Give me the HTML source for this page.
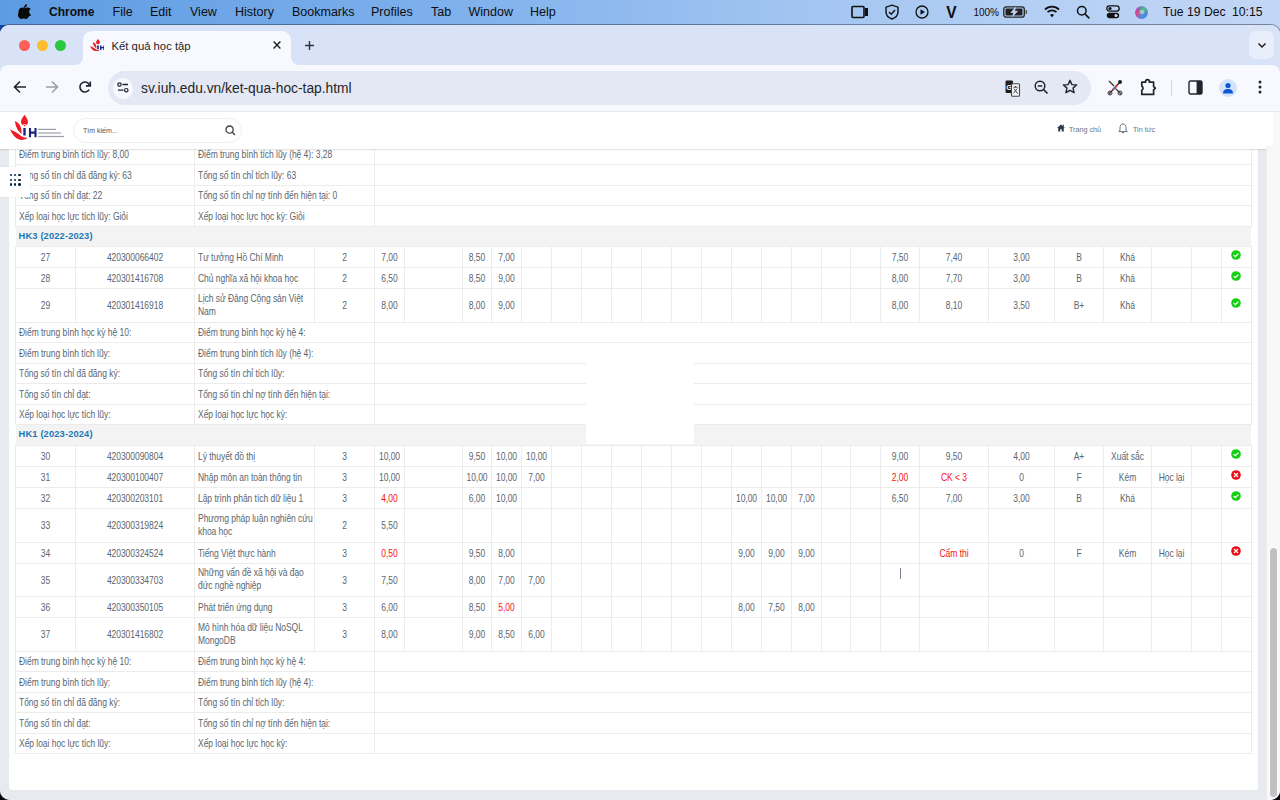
<!DOCTYPE html>
<html><head><meta charset="utf-8">
<style>
*{box-sizing:border-box;margin:0;padding:0}
html,body{width:1280px;height:800px;overflow:hidden;background:#050505;font-family:"Liberation Sans",sans-serif}
#deskr{position:absolute;left:1266px;top:24px;width:14px;height:14px;background:#c3d6f5}
#deskl{position:absolute;left:0;top:24px;width:14px;height:14px;background:#0b4aa8}
#menubar{position:absolute;left:0;top:0;width:1280px;height:25px;background:linear-gradient(90deg,#5d9be2 0%,#7eb0ec 35%,#9fc3f1 60%,#b3cff4 80%,#c3d6f5 100%);}
#win{position:absolute;left:0;top:25px;width:1280px;height:775px;border-radius:9px 9px 10px 10px;overflow:hidden;background:#d9e3f8;box-shadow:0 0 0 1px rgba(40,52,72,0.5)}
#tabstrip{position:absolute;left:0;top:0;width:1280px;height:40px;background:#d9e3f8}
#toolbar{position:absolute;left:0;top:40px;width:1280px;height:47px;background:#f8f9fe;border-radius:8px 8px 0 0;border-bottom:1px solid #e9ebf3}
#page{position:absolute;left:0;top:87px;width:1280px;height:688px;background:#e7ebf0;overflow:hidden}
#content{position:absolute;left:0;top:-112px;width:1280px;height:800px}
.card{position:absolute;left:9px;top:111px;width:1248.5px;height:679px;background:#fff;border-radius:3px}
.hl{position:absolute;height:1px;background:#ececec}
.vl{position:absolute;width:1px;background:#ececec}
.cell{position:absolute;display:flex;align-items:center;justify-content:center;text-align:center;font-size:8.5px;line-height:13.3px;color:#5a6671;padding-top:2.6px;white-space:nowrap;letter-spacing:-0.04px}
.cell span{display:inline-block;transform:scaleY(1.18);transform-origin:50% 77%;line-height:11.2px}
.cell.l{justify-content:flex-start;text-align:left;padding-left:3px}
.cell.l span{transform-origin:0 77%}
.cell.red{color:#fa1212}
.hk span{display:inline-block;transform:scaleY(1.06);transform-origin:0 60%}
.hk{position:absolute;background:#f3f3f3;display:flex;align-items:center;padding-left:2.6px;padding-bottom:1.6px;letter-spacing:0.15px;font-size:9.3px;font-weight:bold;color:#1a78b8}
.ic{position:absolute}
.wbox{position:absolute;background:#fff}

#menubar .mi{position:absolute;top:4px;font-size:12.5px;color:#0d0d0d;line-height:16px;white-space:nowrap}
#menubar .mi.b{font-weight:bold;font-size:12px}
.tl{position:absolute;top:14.5px;width:11.5px;height:11.5px;border-radius:50%}
#tab{position:absolute;left:83px;top:6px;width:208px;height:41px;background:#f8f9fe;border-radius:9px 9px 0 0}
.flare{position:absolute;top:32px;width:8px;height:8px;background:#f8f9fe;overflow:hidden}
.flare div{position:absolute;left:-8px;top:-8px;width:16px;height:16px;border-radius:50%;background:#d9e3f8}
.flare.r div{left:0}
.tabtitle{position:absolute;left:111.5px;top:14px;font-size:11.3px;line-height:14px;color:#1f1f1f;white-space:nowrap}
#tabdd{position:absolute;left:1249px;top:6px;width:25px;height:28px;border-radius:7px;background:#e9eefb}
#omni{position:absolute;left:108px;top:6px;width:983px;height:34px;border-radius:17px;background:#e3e8f4}
#omnicirc{position:absolute;left:113px;top:12.5px;width:20px;height:21px;border-radius:50%;background:#f8f9fe}
.url{position:absolute;left:141px;top:15px;font-size:13.8px;line-height:17px;color:#262626;white-space:nowrap}
#hdr{position:absolute;left:0;top:111px;width:1266px;height:38px;background:#fff;box-shadow:0 1px 1.2px rgba(0,0,0,0.13)}
#hdrx{position:absolute;left:1266px;top:111px;width:7px;height:35px;background:#fff}
#search{position:absolute;left:73px;top:7px;width:169px;height:25px;border-radius:13px;border:1px solid #edf0f3;background:#fff}
#search span{position:absolute;left:9px;top:7px;font-size:7px;line-height:9px;color:#555}
.nav{position:absolute;top:14px;font-size:7.2px;line-height:9px;color:#6b7580;white-space:nowrap}
#sbtrack{position:absolute;left:1266px;top:111px;width:14px;height:689px;background:#f8f8f8;border-left:1px solid #ededed}
#sbthumb{position:absolute;left:1270px;top:548px;width:7px;height:249px;border-radius:3.5px;background:#c1c1c1;box-shadow:0 0 0 1px #fdfdfd}
#grid{position:absolute;left:0;top:167px;width:30px;height:30px;background:#fff;box-shadow:0 0 3px rgba(0,0,0,0.06)}
#grid i{position:absolute;width:2.5px;height:2.5px;border-radius:50%;background:#0c2740}

</style></head><body>
<div id="deskr"></div><div id="deskl"></div>
<div id="menubar">
<svg style="position:absolute;left:18px;top:4px" width="13" height="15" viewBox="0 0 170 200"><path fill="#0a0a0a" d="M150.4 155.5c-3 7-6.6 13.4-10.8 19.3-5.7 8.1-10.4 13.7-14 16.8-5.6 5.1-11.5 7.8-17.9 7.9-4.6 0-10.1-1.3-16.5-3.9-6.5-2.6-12.4-3.9-17.8-3.9-5.7 0-11.8 1.3-18.3 3.9-6.5 2.6-11.8 4-15.8 4.1-6.1.3-12.2-2.4-18.3-8.1-3.9-3.4-8.7-9.2-14.5-17.5-6.2-8.8-11.3-18.9-15.3-30.5C7.1 131 5 118.8 5 107c0-13.5 2.9-25.1 8.8-34.9 4.6-7.8 10.7-14 18.4-18.5 7.7-4.5 16-6.8 24.9-7 4.9 0 11.3 1.5 19.2 4.5 7.9 3 13 4.5 15.2 4.5 1.7 0 7.3-1.8 16.8-5.3 9-3.2 16.5-4.6 22.8-4 16.9 1.4 29.6 8 38 20-15.1 9.2-22.6 22-22.5 38.5.1 12.8 4.8 23.5 14 32 4.2 4 8.8 7 14 9.2-1.1 3.3-2.3 6.4-3.6 9.5zM119.1 7.3c0 10.1-3.7 19.5-11 28.2-8.9 10.3-19.6 16.3-31.2 15.4-.1-1.2-.2-2.5-.2-3.9 0-9.7 4.2-20 11.7-28.5 3.7-4.3 8.5-7.8 14.2-10.7C108.3 5 113.7 3.4 118.8 3c.2 1.4.3 2.8.3 4.3z"/></svg>
<div class="mi b" style="left:49px">Chrome</div>
<div class="mi" style="left:112.5px">File</div>
<div class="mi" style="left:150px">Edit</div>
<div class="mi" style="left:190px">View</div>
<div class="mi" style="left:235px">History</div>
<div class="mi" style="left:292px">Bookmarks</div>
<div class="mi" style="left:371px">Profiles</div>
<div class="mi" style="left:431px">Tab</div>
<div class="mi" style="left:468.5px">Window</div>
<div class="mi" style="left:530px">Help</div>

<svg style="position:absolute;left:851px;top:5px" width="18" height="14" viewBox="0 0 18 14"><rect x="1" y="1.5" width="12" height="11" rx="1" fill="none" stroke="#111" stroke-width="1.6"/><rect x="14" y="3" width="3" height="8" fill="#111"/></svg>
<svg style="position:absolute;left:884px;top:4px" width="16" height="16" viewBox="0 0 16 16"><path d="M8 1.2 L14 3.2 V8 C14 11.5 11.2 13.8 8 15 C4.8 13.8 2 11.5 2 8 V3.2 Z" fill="none" stroke="#111" stroke-width="1.4"/><path d="M5 8 L7.2 10.2 L11 6" fill="none" stroke="#111" stroke-width="1.4"/></svg>
<svg style="position:absolute;left:915px;top:5px" width="14" height="14" viewBox="0 0 14 14"><circle cx="7" cy="7" r="6" fill="none" stroke="#111" stroke-width="1.3"/><path d="M5.5 4.2 L10 7 L5.5 9.8Z" fill="#111"/></svg>
<div class="mi b" style="left:946px;font-size:16px;top:4.5px;transform:scaleX(0.97)">V</div>
<div class="mi" style="left:973.5px;font-size:10px;top:5px;letter-spacing:-0.1px">100%</div>
<svg style="position:absolute;left:1003px;top:6px" width="25" height="12" viewBox="0 0 25 12"><rect x="0.8" y="0.8" width="20.5" height="10.4" rx="2.5" fill="none" stroke="#222" stroke-width="1.3"/><rect x="2.5" y="2.5" width="17" height="7" rx="1" fill="#222"/><rect x="22.5" y="4" width="1.6" height="4" rx="0.8" fill="#555"/><path d="M12.5 1.5 L8 6.5 H11 L9.5 10.5 L14.5 5.2 H11.5 Z" fill="#c6d8f5" stroke="#c6d8f5" stroke-width="0.8"/></svg>
<svg style="position:absolute;left:1044px;top:5px" width="16" height="13" viewBox="0 0 16 13"><path d="M1 4.5 A10 10 0 0 1 15 4.5" fill="none" stroke="#111" stroke-width="1.8"/><path d="M3.6 7.2 A6.3 6.3 0 0 1 12.4 7.2" fill="none" stroke="#111" stroke-width="1.8"/><path d="M6 10 L8 12.3 L10 10 A3 3 0 0 0 6 10Z" fill="#111"/></svg>
<svg style="position:absolute;left:1076px;top:5px" width="14" height="14" viewBox="0 0 14 14"><circle cx="5.8" cy="5.8" r="4.3" fill="none" stroke="#111" stroke-width="1.5"/><path d="M9 9 L12.8 12.8" stroke="#111" stroke-width="1.7" stroke-linecap="round"/></svg>
<svg style="position:absolute;left:1106px;top:5px" width="14" height="14" viewBox="0 0 14 14"><rect x="0.8" y="0.8" width="12.4" height="5.4" rx="2.7" fill="none" stroke="#111" stroke-width="1.3"/><circle cx="4" cy="3.5" r="1.6" fill="#111"/><rect x="0.8" y="7.8" width="12.4" height="5.4" rx="2.7" fill="#111"/><circle cx="10" cy="10.5" r="1.6" fill="#c6d8f5"/></svg>
<svg style="position:absolute;left:1134.5px;top:5.5px" width="13" height="13" viewBox="0 0 14 14"><defs><radialGradient id="s1" cx="0.3" cy="0.6" r="0.6"><stop offset="0" stop-color="#ff3d6e"/><stop offset="1" stop-color="#ff3d6e" stop-opacity="0"/></radialGradient><radialGradient id="s2" cx="0.7" cy="0.25" r="0.55"><stop offset="0" stop-color="#2fd67a"/><stop offset="1" stop-color="#2fd67a" stop-opacity="0"/></radialGradient><radialGradient id="s3" cx="0.6" cy="0.85" r="0.55"><stop offset="0" stop-color="#23a8f2"/><stop offset="1" stop-color="#23a8f2" stop-opacity="0"/></radialGradient></defs><circle cx="7" cy="7" r="6.8" fill="#8a4fd8"/><circle cx="7" cy="7" r="6.8" fill="url(#s1)"/><circle cx="7" cy="7" r="6.8" fill="url(#s2)"/><circle cx="7" cy="7" r="6.8" fill="url(#s3)"/><circle cx="7.5" cy="6.5" r="2.5" fill="#fff" opacity="0.45"/></svg>
<div class="mi" style="left:1163px;font-size:12.2px">Tue 19 Dec</div>
<div class="mi" style="left:1232px;font-size:12.2px">10:15</div>

</div>
<div id="win">
<div id="tabstrip">
<div class="tl" style="left:18.5px;background:#fe5f57"></div>
<div class="tl" style="left:36.5px;background:#febc2e"></div>
<div class="tl" style="left:54.5px;background:#28c840"></div>
<div id="tab"></div>
<div class="flare" style="left:75px"><div></div></div>
<div class="flare r" style="left:291px"><div></div></div>
<svg style="position:absolute;left:89.8px;top:13.8px" width="14.6" height="12.6" viewBox="4 2.8 26.5 25.7" preserveAspectRatio="none">
<path d="M18.5 2.8 C20 5 22 7.5 22 10 C22 12 20.5 13.5 18.5 13.5 C16.5 13.5 15 12 15 10 C15 7.5 17 5 18.5 2.8Z" fill="#f01c24"/>
<path d="M9 9 C13 11 16 14 15.5 22 C12 19 9.5 15 9 9Z" fill="#f01c24"/>
<path d="M4 17.5 C8 19 12 21 15 24 C17 25.5 20 26 22 25.5 C20 27.5 16 28.5 13 27.5 C9 26 6 22 4 17.5Z" fill="#f01c24"/>
<rect x="17" y="16" width="3" height="8" fill="#1a2380"/>
<path d="M23.5 16 V25.2 M29.5 16 V25.2 M23.5 20.6 H29.5" stroke="#1a2380" stroke-width="2.6" fill="none"/>
</svg>
<div class="tabtitle">Kết quả học tập</div>
<svg style="position:absolute;left:272px;top:15px" width="10" height="10" viewBox="0 0 10 10"><path d="M1.6 1.6 L8.4 8.4 M8.4 1.6 L1.6 8.4" stroke="#1f1f1f" stroke-width="1.4"/></svg>
<svg style="position:absolute;left:304px;top:14.5px" width="11" height="11" viewBox="0 0 11 11"><path d="M5.5 1 V10 M1 5.5 H10" stroke="#2a3340" stroke-width="1.4"/></svg>
<div id="tabdd"><svg style="position:absolute;left:7.5px;top:10.5px" width="10" height="7" viewBox="0 0 10 7"><path d="M1.5 1.5 L5 5 L8.5 1.5" stroke="#1f1f1f" stroke-width="1.5" fill="none"/></svg></div>
</div>
<div id="toolbar">
<svg style="position:absolute;left:13px;top:15px" width="14" height="14" viewBox="0 0 14 14"><path d="M13 7 H2 M7 1.5 L1.5 7 L7 12.5" stroke="#1f2530" stroke-width="1.6" fill="none"/></svg>
<svg style="position:absolute;left:45px;top:15px" width="14" height="14" viewBox="0 0 14 14"><path d="M1 7 H12 M7 1.5 L12.5 7 L7 12.5" stroke="#9aa0a6" stroke-width="1.6" fill="none"/></svg>
<svg style="position:absolute;left:78px;top:15px" width="14" height="14" viewBox="0 0 14 14"><path d="M11.6 5.2 A5 5 0 1 0 11.2 9.6" stroke="#1f2530" stroke-width="1.6" fill="none"/><path d="M12.3 1.5 V5.9 H7.9" stroke="#1f2530" stroke-width="1.6" fill="none"/></svg>
<div id="omni"></div>
<div id="omnicirc"><svg style="position:absolute;left:4px;top:4px" width="12" height="11" viewBox="0 0 12 11"><circle cx="2.5" cy="2.5" r="1.7" fill="none" stroke="#1f2530" stroke-width="1.2"/><path d="M5.5 2.5 H11" stroke="#1f2530" stroke-width="1.3"/><circle cx="9.3" cy="8.2" r="1.7" fill="none" stroke="#1f2530" stroke-width="1.2"/><path d="M1 8.2 H6.5" stroke="#1f2530" stroke-width="1.3"/></svg></div>
<div class="url">sv.iuh.edu.vn/ket-qua-hoc-tap.html</div>
<svg style="position:absolute;left:1004.5px;top:14.5px" width="16" height="17" viewBox="0 0 16 17"><rect x="0.5" y="0.5" width="7.5" height="12.5" rx="1.2" fill="#1e1e1e"/><text x="1.2" y="10" font-size="7.5" font-family="Liberation Sans" font-weight="bold" fill="#fff">G</text><rect x="6.5" y="3.8" width="8" height="12.4" rx="1" fill="#f4f6fb" stroke="#444" stroke-width="1.1"/><path d="M8.3 7.2 H12.8 M10.5 6 V7.2 M9 8.6 L12.6 13.6 M12.2 8.6 L8.6 13.2" stroke="#333" stroke-width="0.9" fill="none"/></svg>
<svg style="position:absolute;left:1034px;top:15px" width="15" height="15" viewBox="0 0 15 15"><circle cx="6" cy="6" r="4.8" fill="none" stroke="#1f2530" stroke-width="1.5"/><path d="M3.8 6 H8.2" stroke="#1f2530" stroke-width="1.4"/><path d="M9.5 9.5 L13.5 13.5" stroke="#1f2530" stroke-width="1.7"/></svg>
<svg style="position:absolute;left:1062px;top:14px" width="16" height="16" viewBox="0 0 16 16"><path d="M8 1.3 L9.9 5.6 L14.6 6 L11 9.1 L12.1 13.7 L8 11.3 L3.9 13.7 L5 9.1 L1.4 6 L6.1 5.6 Z" fill="none" stroke="#1f2530" stroke-width="1.4" stroke-linejoin="round"/></svg>
<svg style="position:absolute;left:1107px;top:14px" width="16" height="17" viewBox="0 0 16 17"><path d="M2 2 L7 7 M14 15 L9 10 M2 15 L14 2" stroke="#333" stroke-width="1.3"/><circle cx="13" cy="3" r="2" fill="#222"/><circle cx="3" cy="14" r="2" fill="none" stroke="#333" stroke-width="1"/><circle cx="13" cy="14" r="2" fill="none" stroke="#333" stroke-width="1"/><path d="M5.5 11 L10.5 6" stroke="#e53935" stroke-width="1.8"/><circle cx="8" cy="9" r="1.2" fill="#3b6fe0"/></svg>
<svg style="position:absolute;left:1139.5px;top:13px" width="17" height="18" viewBox="0 0 17 18"><path d="M1.8 4.2 H5.6 V3.6 A1.9 1.9 0 0 1 9.4 3.6 V4.2 H13.6 V8.6 L15.4 10.2 L13.6 11.8 V16.4 H1.8 V12.2 C3.4 11.6 3.4 8.8 1.8 8.2 Z" fill="#f8f9fe" stroke="#1f2530" stroke-width="1.7" stroke-linejoin="round"/></svg>
<div style="position:absolute;left:1170.5px;top:15px;width:1.3px;height:15.5px;background:#c9d6ee"></div>
<svg style="position:absolute;left:1188px;top:15px" width="15" height="15" viewBox="0 0 15 15"><rect x="1" y="1" width="13" height="13" rx="1.5" fill="none" stroke="#1f2530" stroke-width="1.4"/><rect x="8.6" y="1" width="5.4" height="13" fill="#1f2530"/></svg>
<div style="position:absolute;left:1219px;top:14px;width:18px;height:18px;border-radius:50%;background:#d3e3fd"></div>
<svg style="position:absolute;left:1222px;top:17px" width="12" height="12" viewBox="0 0 12 12"><circle cx="6" cy="3.6" r="2.6" fill="#0b57d0"/><path d="M1 11.5 C1 8 3.2 7 6 7 C8.8 7 11 8 11 11.5Z" fill="#0b57d0"/></svg>
<svg style="position:absolute;left:1257px;top:14px" width="6" height="16" viewBox="0 0 6 16"><circle cx="3" cy="3" r="1.5" fill="#1f2530"/><circle cx="3" cy="8" r="1.5" fill="#1f2530"/><circle cx="3" cy="13" r="1.5" fill="#1f2530"/></svg>
</div>
 <div id="page"><div id="content">
  <div class="card"></div>
<div class="vl" style="left:15px;top:144px;height:20px"></div>
<div class="vl" style="left:194px;top:144px;height:20px"></div>
<div class="vl" style="left:374px;top:144px;height:20px"></div>
<div class="vl" style="left:1251px;top:144px;height:20px"></div>
<div class="cell l" style="left:16px;width:178px;top:145px;height:19px"><span>Điểm trung bình tích lũy: 8,00</span></div>
<div class="cell l" style="left:195px;width:179px;top:145px;height:19px"><span>Điểm trung bình tích lũy (hệ 4): 3,28</span></div>
<div class="hl" style="top:144px;left:15px;width:1237px"></div>
<div class="vl" style="left:15px;top:164px;height:21px"></div>
<div class="vl" style="left:194px;top:164px;height:21px"></div>
<div class="vl" style="left:374px;top:164px;height:21px"></div>
<div class="vl" style="left:1251px;top:164px;height:21px"></div>
<div class="cell l" style="left:16px;width:178px;top:165px;height:20px"><span>Tổng số tín chỉ đã đăng ký: 63</span></div>
<div class="cell l" style="left:195px;width:179px;top:165px;height:20px"><span>Tổng số tín chỉ tích lũy: 63</span></div>
<div class="hl" style="top:164px;left:15px;width:1237px"></div>
<div class="vl" style="left:15px;top:185px;height:20px"></div>
<div class="vl" style="left:194px;top:185px;height:20px"></div>
<div class="vl" style="left:374px;top:185px;height:20px"></div>
<div class="vl" style="left:1251px;top:185px;height:20px"></div>
<div class="cell l" style="left:16px;width:178px;top:186px;height:19px"><span>Tổng số tín chỉ đạt: 22</span></div>
<div class="cell l" style="left:195px;width:179px;top:186px;height:19px"><span>Tổng số tín chỉ nợ tính đến hiện tại: 0</span></div>
<div class="hl" style="top:185px;left:15px;width:1237px"></div>
<div class="vl" style="left:15px;top:205px;height:21px"></div>
<div class="vl" style="left:194px;top:205px;height:21px"></div>
<div class="vl" style="left:374px;top:205px;height:21px"></div>
<div class="vl" style="left:1251px;top:205px;height:21px"></div>
<div class="cell l" style="left:16px;width:178px;top:206px;height:20px"><span>Xếp loại học lực tích lũy: Giỏi</span></div>
<div class="cell l" style="left:195px;width:179px;top:206px;height:20px"><span>Xếp loại học lực học kỳ: Giỏi</span></div>
<div class="hl" style="top:205px;left:15px;width:1237px"></div>
<div class="hk" style="left:16px;width:1235px;top:227px;height:19px"><span>HK3 (2022-2023)</span></div>
<div class="hl" style="top:226px;left:15px;width:1237px"></div>
<div class="vl" style="left:15px;top:246px;height:21px"></div>
<div class="vl" style="left:75px;top:246px;height:21px"></div>
<div class="vl" style="left:194px;top:246px;height:21px"></div>
<div class="vl" style="left:314px;top:246px;height:21px"></div>
<div class="vl" style="left:374px;top:246px;height:21px"></div>
<div class="vl" style="left:404px;top:246px;height:21px"></div>
<div class="vl" style="left:462px;top:246px;height:21px"></div>
<div class="vl" style="left:491px;top:246px;height:21px"></div>
<div class="vl" style="left:521px;top:246px;height:21px"></div>
<div class="vl" style="left:551px;top:246px;height:21px"></div>
<div class="vl" style="left:581px;top:246px;height:21px"></div>
<div class="vl" style="left:611px;top:246px;height:21px"></div>
<div class="vl" style="left:641px;top:246px;height:21px"></div>
<div class="vl" style="left:671px;top:246px;height:21px"></div>
<div class="vl" style="left:701px;top:246px;height:21px"></div>
<div class="vl" style="left:731px;top:246px;height:21px"></div>
<div class="vl" style="left:761px;top:246px;height:21px"></div>
<div class="vl" style="left:791px;top:246px;height:21px"></div>
<div class="vl" style="left:821px;top:246px;height:21px"></div>
<div class="vl" style="left:850px;top:246px;height:21px"></div>
<div class="vl" style="left:880px;top:246px;height:21px"></div>
<div class="vl" style="left:919px;top:246px;height:21px"></div>
<div class="vl" style="left:988px;top:246px;height:21px"></div>
<div class="vl" style="left:1054px;top:246px;height:21px"></div>
<div class="vl" style="left:1103px;top:246px;height:21px"></div>
<div class="vl" style="left:1151px;top:246px;height:21px"></div>
<div class="vl" style="left:1191px;top:246px;height:21px"></div>
<div class="vl" style="left:1221px;top:246px;height:21px"></div>
<div class="vl" style="left:1251px;top:246px;height:21px"></div>
<div class="cell" style="left:16px;width:59px;top:247px;height:20px"><span>27</span></div>
<div class="cell" style="left:76px;width:118px;top:247px;height:20px"><span>420300066402</span></div>
<div class="cell l" style="left:195px;width:119px;top:247px;height:20px"><span>Tư tưởng Hồ Chí Minh</span></div>
<div class="cell" style="left:315px;width:59px;top:247px;height:20px"><span>2</span></div>
<div class="cell" style="left:375px;width:29px;top:247px;height:20px"><span>7,00</span></div>
<div class="cell" style="left:463px;width:28px;top:247px;height:20px"><span>8,50</span></div>
<div class="cell" style="left:492px;width:29px;top:247px;height:20px"><span>7,00</span></div>
<div class="cell" style="left:881px;width:38px;top:247px;height:20px"><span>7,50</span></div>
<div class="cell" style="left:920px;width:68px;top:247px;height:20px"><span>7,40</span></div>
<div class="cell" style="left:989px;width:65px;top:247px;height:20px"><span>3,00</span></div>
<div class="cell" style="left:1055px;width:48px;top:247px;height:20px"><span>B</span></div>
<div class="cell" style="left:1104px;width:47px;top:247px;height:20px"><span>Khá</span></div>
<svg class="ic" style="left:1231px;top:249.7px" width="10" height="10" viewBox="0 0 10 10"><circle cx="5" cy="5" r="4.8" fill="#14d014"/><path d="M2.6 5.1 L4.3 6.7 L7.4 3.6" stroke="#fff" stroke-width="1.3" fill="none"/></svg>
<div class="hl" style="top:246px;left:15px;width:1237px"></div>
<div class="vl" style="left:15px;top:267px;height:21px"></div>
<div class="vl" style="left:75px;top:267px;height:21px"></div>
<div class="vl" style="left:194px;top:267px;height:21px"></div>
<div class="vl" style="left:314px;top:267px;height:21px"></div>
<div class="vl" style="left:374px;top:267px;height:21px"></div>
<div class="vl" style="left:404px;top:267px;height:21px"></div>
<div class="vl" style="left:462px;top:267px;height:21px"></div>
<div class="vl" style="left:491px;top:267px;height:21px"></div>
<div class="vl" style="left:521px;top:267px;height:21px"></div>
<div class="vl" style="left:551px;top:267px;height:21px"></div>
<div class="vl" style="left:581px;top:267px;height:21px"></div>
<div class="vl" style="left:611px;top:267px;height:21px"></div>
<div class="vl" style="left:641px;top:267px;height:21px"></div>
<div class="vl" style="left:671px;top:267px;height:21px"></div>
<div class="vl" style="left:701px;top:267px;height:21px"></div>
<div class="vl" style="left:731px;top:267px;height:21px"></div>
<div class="vl" style="left:761px;top:267px;height:21px"></div>
<div class="vl" style="left:791px;top:267px;height:21px"></div>
<div class="vl" style="left:821px;top:267px;height:21px"></div>
<div class="vl" style="left:850px;top:267px;height:21px"></div>
<div class="vl" style="left:880px;top:267px;height:21px"></div>
<div class="vl" style="left:919px;top:267px;height:21px"></div>
<div class="vl" style="left:988px;top:267px;height:21px"></div>
<div class="vl" style="left:1054px;top:267px;height:21px"></div>
<div class="vl" style="left:1103px;top:267px;height:21px"></div>
<div class="vl" style="left:1151px;top:267px;height:21px"></div>
<div class="vl" style="left:1191px;top:267px;height:21px"></div>
<div class="vl" style="left:1221px;top:267px;height:21px"></div>
<div class="vl" style="left:1251px;top:267px;height:21px"></div>
<div class="cell" style="left:16px;width:59px;top:268px;height:20px"><span>28</span></div>
<div class="cell" style="left:76px;width:118px;top:268px;height:20px"><span>420301416708</span></div>
<div class="cell l" style="left:195px;width:119px;top:268px;height:20px"><span>Chủ nghĩa xã hội khoa học</span></div>
<div class="cell" style="left:315px;width:59px;top:268px;height:20px"><span>2</span></div>
<div class="cell" style="left:375px;width:29px;top:268px;height:20px"><span>6,50</span></div>
<div class="cell" style="left:463px;width:28px;top:268px;height:20px"><span>8,50</span></div>
<div class="cell" style="left:492px;width:29px;top:268px;height:20px"><span>9,00</span></div>
<div class="cell" style="left:881px;width:38px;top:268px;height:20px"><span>8,00</span></div>
<div class="cell" style="left:920px;width:68px;top:268px;height:20px"><span>7,70</span></div>
<div class="cell" style="left:989px;width:65px;top:268px;height:20px"><span>3,00</span></div>
<div class="cell" style="left:1055px;width:48px;top:268px;height:20px"><span>B</span></div>
<div class="cell" style="left:1104px;width:47px;top:268px;height:20px"><span>Khá</span></div>
<svg class="ic" style="left:1231px;top:270.7px" width="10" height="10" viewBox="0 0 10 10"><circle cx="5" cy="5" r="4.8" fill="#14d014"/><path d="M2.6 5.1 L4.3 6.7 L7.4 3.6" stroke="#fff" stroke-width="1.3" fill="none"/></svg>
<div class="hl" style="top:267px;left:15px;width:1237px"></div>
<div class="vl" style="left:15px;top:288px;height:34px"></div>
<div class="vl" style="left:75px;top:288px;height:34px"></div>
<div class="vl" style="left:194px;top:288px;height:34px"></div>
<div class="vl" style="left:314px;top:288px;height:34px"></div>
<div class="vl" style="left:374px;top:288px;height:34px"></div>
<div class="vl" style="left:404px;top:288px;height:34px"></div>
<div class="vl" style="left:462px;top:288px;height:34px"></div>
<div class="vl" style="left:491px;top:288px;height:34px"></div>
<div class="vl" style="left:521px;top:288px;height:34px"></div>
<div class="vl" style="left:551px;top:288px;height:34px"></div>
<div class="vl" style="left:581px;top:288px;height:34px"></div>
<div class="vl" style="left:611px;top:288px;height:34px"></div>
<div class="vl" style="left:641px;top:288px;height:34px"></div>
<div class="vl" style="left:671px;top:288px;height:34px"></div>
<div class="vl" style="left:701px;top:288px;height:34px"></div>
<div class="vl" style="left:731px;top:288px;height:34px"></div>
<div class="vl" style="left:761px;top:288px;height:34px"></div>
<div class="vl" style="left:791px;top:288px;height:34px"></div>
<div class="vl" style="left:821px;top:288px;height:34px"></div>
<div class="vl" style="left:850px;top:288px;height:34px"></div>
<div class="vl" style="left:880px;top:288px;height:34px"></div>
<div class="vl" style="left:919px;top:288px;height:34px"></div>
<div class="vl" style="left:988px;top:288px;height:34px"></div>
<div class="vl" style="left:1054px;top:288px;height:34px"></div>
<div class="vl" style="left:1103px;top:288px;height:34px"></div>
<div class="vl" style="left:1151px;top:288px;height:34px"></div>
<div class="vl" style="left:1191px;top:288px;height:34px"></div>
<div class="vl" style="left:1221px;top:288px;height:34px"></div>
<div class="vl" style="left:1251px;top:288px;height:34px"></div>
<div class="cell" style="left:16px;width:59px;top:289px;height:33px"><span>29</span></div>
<div class="cell" style="left:76px;width:118px;top:289px;height:33px"><span>420301416918</span></div>
<div class="cell l" style="left:195px;width:119px;top:289px;height:33px"><span>Lịch sử Đảng Cộng sản Việt<br>Nam</span></div>
<div class="cell" style="left:315px;width:59px;top:289px;height:33px"><span>2</span></div>
<div class="cell" style="left:375px;width:29px;top:289px;height:33px"><span>8,00</span></div>
<div class="cell" style="left:463px;width:28px;top:289px;height:33px"><span>8,00</span></div>
<div class="cell" style="left:492px;width:29px;top:289px;height:33px"><span>9,00</span></div>
<div class="cell" style="left:881px;width:38px;top:289px;height:33px"><span>8,00</span></div>
<div class="cell" style="left:920px;width:68px;top:289px;height:33px"><span>8,10</span></div>
<div class="cell" style="left:989px;width:65px;top:289px;height:33px"><span>3,50</span></div>
<div class="cell" style="left:1055px;width:48px;top:289px;height:33px"><span>B+</span></div>
<div class="cell" style="left:1104px;width:47px;top:289px;height:33px"><span>Khá</span></div>
<svg class="ic" style="left:1231px;top:298.2px" width="10" height="10" viewBox="0 0 10 10"><circle cx="5" cy="5" r="4.8" fill="#14d014"/><path d="M2.6 5.1 L4.3 6.7 L7.4 3.6" stroke="#fff" stroke-width="1.3" fill="none"/></svg>
<div class="hl" style="top:288px;left:15px;width:1237px"></div>
<div class="vl" style="left:15px;top:322px;height:20px"></div>
<div class="vl" style="left:194px;top:322px;height:20px"></div>
<div class="vl" style="left:374px;top:322px;height:20px"></div>
<div class="vl" style="left:1251px;top:322px;height:20px"></div>
<div class="cell l" style="left:16px;width:178px;top:323px;height:19px"><span>Điểm trung bình học kỳ hệ 10:</span></div>
<div class="cell l" style="left:195px;width:179px;top:323px;height:19px"><span>Điểm trung bình học kỳ hệ 4:</span></div>
<div class="hl" style="top:322px;left:15px;width:1237px"></div>
<div class="vl" style="left:15px;top:342px;height:21px"></div>
<div class="vl" style="left:194px;top:342px;height:21px"></div>
<div class="vl" style="left:374px;top:342px;height:21px"></div>
<div class="vl" style="left:1251px;top:342px;height:21px"></div>
<div class="cell l" style="left:16px;width:178px;top:343px;height:20px"><span>Điểm trung bình tích lũy:</span></div>
<div class="cell l" style="left:195px;width:179px;top:343px;height:20px"><span>Điểm trung bình tích lũy (hệ 4):</span></div>
<div class="hl" style="top:342px;left:15px;width:1237px"></div>
<div class="vl" style="left:15px;top:363px;height:20px"></div>
<div class="vl" style="left:194px;top:363px;height:20px"></div>
<div class="vl" style="left:374px;top:363px;height:20px"></div>
<div class="vl" style="left:1251px;top:363px;height:20px"></div>
<div class="cell l" style="left:16px;width:178px;top:364px;height:19px"><span>Tổng số tín chỉ đã đăng ký:</span></div>
<div class="cell l" style="left:195px;width:179px;top:364px;height:19px"><span>Tổng số tín chỉ tích lũy:</span></div>
<div class="hl" style="top:363px;left:15px;width:1237px"></div>
<div class="vl" style="left:15px;top:383px;height:21px"></div>
<div class="vl" style="left:194px;top:383px;height:21px"></div>
<div class="vl" style="left:374px;top:383px;height:21px"></div>
<div class="vl" style="left:1251px;top:383px;height:21px"></div>
<div class="cell l" style="left:16px;width:178px;top:384px;height:20px"><span>Tổng số tín chỉ đạt:</span></div>
<div class="cell l" style="left:195px;width:179px;top:384px;height:20px"><span>Tổng số tín chỉ nợ tính đến hiện tại:</span></div>
<div class="hl" style="top:383px;left:15px;width:1237px"></div>
<div class="vl" style="left:15px;top:404px;height:20px"></div>
<div class="vl" style="left:194px;top:404px;height:20px"></div>
<div class="vl" style="left:374px;top:404px;height:20px"></div>
<div class="vl" style="left:1251px;top:404px;height:20px"></div>
<div class="cell l" style="left:16px;width:178px;top:405px;height:19px"><span>Xếp loại học lực tích lũy:</span></div>
<div class="cell l" style="left:195px;width:179px;top:405px;height:19px"><span>Xếp loại học lực học kỳ:</span></div>
<div class="hl" style="top:404px;left:15px;width:1237px"></div>
<div class="hk" style="left:16px;width:1235px;top:425px;height:20px"><span>HK1 (2023-2024)</span></div>
<div class="hl" style="top:424px;left:15px;width:1237px"></div>
<div class="vl" style="left:15px;top:445px;height:21px"></div>
<div class="vl" style="left:75px;top:445px;height:21px"></div>
<div class="vl" style="left:194px;top:445px;height:21px"></div>
<div class="vl" style="left:314px;top:445px;height:21px"></div>
<div class="vl" style="left:374px;top:445px;height:21px"></div>
<div class="vl" style="left:404px;top:445px;height:21px"></div>
<div class="vl" style="left:462px;top:445px;height:21px"></div>
<div class="vl" style="left:491px;top:445px;height:21px"></div>
<div class="vl" style="left:521px;top:445px;height:21px"></div>
<div class="vl" style="left:551px;top:445px;height:21px"></div>
<div class="vl" style="left:581px;top:445px;height:21px"></div>
<div class="vl" style="left:611px;top:445px;height:21px"></div>
<div class="vl" style="left:641px;top:445px;height:21px"></div>
<div class="vl" style="left:671px;top:445px;height:21px"></div>
<div class="vl" style="left:701px;top:445px;height:21px"></div>
<div class="vl" style="left:731px;top:445px;height:21px"></div>
<div class="vl" style="left:761px;top:445px;height:21px"></div>
<div class="vl" style="left:791px;top:445px;height:21px"></div>
<div class="vl" style="left:821px;top:445px;height:21px"></div>
<div class="vl" style="left:850px;top:445px;height:21px"></div>
<div class="vl" style="left:880px;top:445px;height:21px"></div>
<div class="vl" style="left:919px;top:445px;height:21px"></div>
<div class="vl" style="left:988px;top:445px;height:21px"></div>
<div class="vl" style="left:1054px;top:445px;height:21px"></div>
<div class="vl" style="left:1103px;top:445px;height:21px"></div>
<div class="vl" style="left:1151px;top:445px;height:21px"></div>
<div class="vl" style="left:1191px;top:445px;height:21px"></div>
<div class="vl" style="left:1221px;top:445px;height:21px"></div>
<div class="vl" style="left:1251px;top:445px;height:21px"></div>
<div class="cell" style="left:16px;width:59px;top:446px;height:20px"><span>30</span></div>
<div class="cell" style="left:76px;width:118px;top:446px;height:20px"><span>420300090804</span></div>
<div class="cell l" style="left:195px;width:119px;top:446px;height:20px"><span>Lý thuyết đồ thị</span></div>
<div class="cell" style="left:315px;width:59px;top:446px;height:20px"><span>3</span></div>
<div class="cell" style="left:375px;width:29px;top:446px;height:20px"><span>10,00</span></div>
<div class="cell" style="left:463px;width:28px;top:446px;height:20px"><span>9,50</span></div>
<div class="cell" style="left:492px;width:29px;top:446px;height:20px"><span>10,00</span></div>
<div class="cell" style="left:522px;width:29px;top:446px;height:20px"><span>10,00</span></div>
<div class="cell" style="left:881px;width:38px;top:446px;height:20px"><span>9,00</span></div>
<div class="cell" style="left:920px;width:68px;top:446px;height:20px"><span>9,50</span></div>
<div class="cell" style="left:989px;width:65px;top:446px;height:20px"><span>4,00</span></div>
<div class="cell" style="left:1055px;width:48px;top:446px;height:20px"><span>A+</span></div>
<div class="cell" style="left:1104px;width:47px;top:446px;height:20px"><span>Xuất sắc</span></div>
<svg class="ic" style="left:1231px;top:448.7px" width="10" height="10" viewBox="0 0 10 10"><circle cx="5" cy="5" r="4.8" fill="#14d014"/><path d="M2.6 5.1 L4.3 6.7 L7.4 3.6" stroke="#fff" stroke-width="1.3" fill="none"/></svg>
<div class="hl" style="top:445px;left:15px;width:1237px"></div>
<div class="vl" style="left:15px;top:466px;height:21px"></div>
<div class="vl" style="left:75px;top:466px;height:21px"></div>
<div class="vl" style="left:194px;top:466px;height:21px"></div>
<div class="vl" style="left:314px;top:466px;height:21px"></div>
<div class="vl" style="left:374px;top:466px;height:21px"></div>
<div class="vl" style="left:404px;top:466px;height:21px"></div>
<div class="vl" style="left:462px;top:466px;height:21px"></div>
<div class="vl" style="left:491px;top:466px;height:21px"></div>
<div class="vl" style="left:521px;top:466px;height:21px"></div>
<div class="vl" style="left:551px;top:466px;height:21px"></div>
<div class="vl" style="left:581px;top:466px;height:21px"></div>
<div class="vl" style="left:611px;top:466px;height:21px"></div>
<div class="vl" style="left:641px;top:466px;height:21px"></div>
<div class="vl" style="left:671px;top:466px;height:21px"></div>
<div class="vl" style="left:701px;top:466px;height:21px"></div>
<div class="vl" style="left:731px;top:466px;height:21px"></div>
<div class="vl" style="left:761px;top:466px;height:21px"></div>
<div class="vl" style="left:791px;top:466px;height:21px"></div>
<div class="vl" style="left:821px;top:466px;height:21px"></div>
<div class="vl" style="left:850px;top:466px;height:21px"></div>
<div class="vl" style="left:880px;top:466px;height:21px"></div>
<div class="vl" style="left:919px;top:466px;height:21px"></div>
<div class="vl" style="left:988px;top:466px;height:21px"></div>
<div class="vl" style="left:1054px;top:466px;height:21px"></div>
<div class="vl" style="left:1103px;top:466px;height:21px"></div>
<div class="vl" style="left:1151px;top:466px;height:21px"></div>
<div class="vl" style="left:1191px;top:466px;height:21px"></div>
<div class="vl" style="left:1221px;top:466px;height:21px"></div>
<div class="vl" style="left:1251px;top:466px;height:21px"></div>
<div class="cell" style="left:16px;width:59px;top:467px;height:20px"><span>31</span></div>
<div class="cell" style="left:76px;width:118px;top:467px;height:20px"><span>420300100407</span></div>
<div class="cell l" style="left:195px;width:119px;top:467px;height:20px"><span>Nhập môn an toàn thông tin</span></div>
<div class="cell" style="left:315px;width:59px;top:467px;height:20px"><span>3</span></div>
<div class="cell" style="left:375px;width:29px;top:467px;height:20px"><span>10,00</span></div>
<div class="cell" style="left:463px;width:28px;top:467px;height:20px"><span>10,00</span></div>
<div class="cell" style="left:492px;width:29px;top:467px;height:20px"><span>10,00</span></div>
<div class="cell" style="left:522px;width:29px;top:467px;height:20px"><span>7,00</span></div>
<div class="cell red" style="left:881px;width:38px;top:467px;height:20px"><span>2,00</span></div>
<div class="cell red" style="left:920px;width:68px;top:467px;height:20px"><span>CK &lt; 3</span></div>
<div class="cell" style="left:989px;width:65px;top:467px;height:20px"><span>0</span></div>
<div class="cell" style="left:1055px;width:48px;top:467px;height:20px"><span>F</span></div>
<div class="cell" style="left:1104px;width:47px;top:467px;height:20px"><span>Kém</span></div>
<div class="cell" style="left:1152px;width:39px;top:467px;height:20px"><span>Học lại</span></div>
<svg class="ic" style="left:1231px;top:469.7px" width="10" height="10" viewBox="0 0 10 10"><circle cx="5" cy="5" r="4.8" fill="#ee0c12"/><path d="M3 3 L7 7 M7 3 L3 7" stroke="#fff" stroke-width="1.3" fill="none"/></svg>
<div class="hl" style="top:466px;left:15px;width:1237px"></div>
<div class="vl" style="left:15px;top:487px;height:21px"></div>
<div class="vl" style="left:75px;top:487px;height:21px"></div>
<div class="vl" style="left:194px;top:487px;height:21px"></div>
<div class="vl" style="left:314px;top:487px;height:21px"></div>
<div class="vl" style="left:374px;top:487px;height:21px"></div>
<div class="vl" style="left:404px;top:487px;height:21px"></div>
<div class="vl" style="left:462px;top:487px;height:21px"></div>
<div class="vl" style="left:491px;top:487px;height:21px"></div>
<div class="vl" style="left:521px;top:487px;height:21px"></div>
<div class="vl" style="left:551px;top:487px;height:21px"></div>
<div class="vl" style="left:581px;top:487px;height:21px"></div>
<div class="vl" style="left:611px;top:487px;height:21px"></div>
<div class="vl" style="left:641px;top:487px;height:21px"></div>
<div class="vl" style="left:671px;top:487px;height:21px"></div>
<div class="vl" style="left:701px;top:487px;height:21px"></div>
<div class="vl" style="left:731px;top:487px;height:21px"></div>
<div class="vl" style="left:761px;top:487px;height:21px"></div>
<div class="vl" style="left:791px;top:487px;height:21px"></div>
<div class="vl" style="left:821px;top:487px;height:21px"></div>
<div class="vl" style="left:850px;top:487px;height:21px"></div>
<div class="vl" style="left:880px;top:487px;height:21px"></div>
<div class="vl" style="left:919px;top:487px;height:21px"></div>
<div class="vl" style="left:988px;top:487px;height:21px"></div>
<div class="vl" style="left:1054px;top:487px;height:21px"></div>
<div class="vl" style="left:1103px;top:487px;height:21px"></div>
<div class="vl" style="left:1151px;top:487px;height:21px"></div>
<div class="vl" style="left:1191px;top:487px;height:21px"></div>
<div class="vl" style="left:1221px;top:487px;height:21px"></div>
<div class="vl" style="left:1251px;top:487px;height:21px"></div>
<div class="cell" style="left:16px;width:59px;top:488px;height:20px"><span>32</span></div>
<div class="cell" style="left:76px;width:118px;top:488px;height:20px"><span>420300203101</span></div>
<div class="cell l" style="left:195px;width:119px;top:488px;height:20px"><span>Lập trình phân tích dữ liệu 1</span></div>
<div class="cell" style="left:315px;width:59px;top:488px;height:20px"><span>3</span></div>
<div class="cell red" style="left:375px;width:29px;top:488px;height:20px"><span>4,00</span></div>
<div class="cell" style="left:463px;width:28px;top:488px;height:20px"><span>6,00</span></div>
<div class="cell" style="left:492px;width:29px;top:488px;height:20px"><span>10,00</span></div>
<div class="cell" style="left:732px;width:29px;top:488px;height:20px"><span>10,00</span></div>
<div class="cell" style="left:762px;width:29px;top:488px;height:20px"><span>10,00</span></div>
<div class="cell" style="left:792px;width:29px;top:488px;height:20px"><span>7,00</span></div>
<div class="cell" style="left:881px;width:38px;top:488px;height:20px"><span>6,50</span></div>
<div class="cell" style="left:920px;width:68px;top:488px;height:20px"><span>7,00</span></div>
<div class="cell" style="left:989px;width:65px;top:488px;height:20px"><span>3,00</span></div>
<div class="cell" style="left:1055px;width:48px;top:488px;height:20px"><span>B</span></div>
<div class="cell" style="left:1104px;width:47px;top:488px;height:20px"><span>Khá</span></div>
<svg class="ic" style="left:1231px;top:490.7px" width="10" height="10" viewBox="0 0 10 10"><circle cx="5" cy="5" r="4.8" fill="#14d014"/><path d="M2.6 5.1 L4.3 6.7 L7.4 3.6" stroke="#fff" stroke-width="1.3" fill="none"/></svg>
<div class="hl" style="top:487px;left:15px;width:1237px"></div>
<div class="vl" style="left:15px;top:508px;height:34px"></div>
<div class="vl" style="left:75px;top:508px;height:34px"></div>
<div class="vl" style="left:194px;top:508px;height:34px"></div>
<div class="vl" style="left:314px;top:508px;height:34px"></div>
<div class="vl" style="left:374px;top:508px;height:34px"></div>
<div class="vl" style="left:404px;top:508px;height:34px"></div>
<div class="vl" style="left:462px;top:508px;height:34px"></div>
<div class="vl" style="left:491px;top:508px;height:34px"></div>
<div class="vl" style="left:521px;top:508px;height:34px"></div>
<div class="vl" style="left:551px;top:508px;height:34px"></div>
<div class="vl" style="left:581px;top:508px;height:34px"></div>
<div class="vl" style="left:611px;top:508px;height:34px"></div>
<div class="vl" style="left:641px;top:508px;height:34px"></div>
<div class="vl" style="left:671px;top:508px;height:34px"></div>
<div class="vl" style="left:701px;top:508px;height:34px"></div>
<div class="vl" style="left:731px;top:508px;height:34px"></div>
<div class="vl" style="left:761px;top:508px;height:34px"></div>
<div class="vl" style="left:791px;top:508px;height:34px"></div>
<div class="vl" style="left:821px;top:508px;height:34px"></div>
<div class="vl" style="left:850px;top:508px;height:34px"></div>
<div class="vl" style="left:880px;top:508px;height:34px"></div>
<div class="vl" style="left:919px;top:508px;height:34px"></div>
<div class="vl" style="left:988px;top:508px;height:34px"></div>
<div class="vl" style="left:1054px;top:508px;height:34px"></div>
<div class="vl" style="left:1103px;top:508px;height:34px"></div>
<div class="vl" style="left:1151px;top:508px;height:34px"></div>
<div class="vl" style="left:1191px;top:508px;height:34px"></div>
<div class="vl" style="left:1221px;top:508px;height:34px"></div>
<div class="vl" style="left:1251px;top:508px;height:34px"></div>
<div class="cell" style="left:16px;width:59px;top:509px;height:33px"><span>33</span></div>
<div class="cell" style="left:76px;width:118px;top:509px;height:33px"><span>420300319824</span></div>
<div class="cell l" style="left:195px;width:119px;top:509px;height:33px"><span>Phương pháp luận nghiên cứu<br>khoa học</span></div>
<div class="cell" style="left:315px;width:59px;top:509px;height:33px"><span>2</span></div>
<div class="cell" style="left:375px;width:29px;top:509px;height:33px"><span>5,50</span></div>
<div class="hl" style="top:508px;left:15px;width:1237px"></div>
<div class="vl" style="left:15px;top:542px;height:21px"></div>
<div class="vl" style="left:75px;top:542px;height:21px"></div>
<div class="vl" style="left:194px;top:542px;height:21px"></div>
<div class="vl" style="left:314px;top:542px;height:21px"></div>
<div class="vl" style="left:374px;top:542px;height:21px"></div>
<div class="vl" style="left:404px;top:542px;height:21px"></div>
<div class="vl" style="left:462px;top:542px;height:21px"></div>
<div class="vl" style="left:491px;top:542px;height:21px"></div>
<div class="vl" style="left:521px;top:542px;height:21px"></div>
<div class="vl" style="left:551px;top:542px;height:21px"></div>
<div class="vl" style="left:581px;top:542px;height:21px"></div>
<div class="vl" style="left:611px;top:542px;height:21px"></div>
<div class="vl" style="left:641px;top:542px;height:21px"></div>
<div class="vl" style="left:671px;top:542px;height:21px"></div>
<div class="vl" style="left:701px;top:542px;height:21px"></div>
<div class="vl" style="left:731px;top:542px;height:21px"></div>
<div class="vl" style="left:761px;top:542px;height:21px"></div>
<div class="vl" style="left:791px;top:542px;height:21px"></div>
<div class="vl" style="left:821px;top:542px;height:21px"></div>
<div class="vl" style="left:850px;top:542px;height:21px"></div>
<div class="vl" style="left:880px;top:542px;height:21px"></div>
<div class="vl" style="left:919px;top:542px;height:21px"></div>
<div class="vl" style="left:988px;top:542px;height:21px"></div>
<div class="vl" style="left:1054px;top:542px;height:21px"></div>
<div class="vl" style="left:1103px;top:542px;height:21px"></div>
<div class="vl" style="left:1151px;top:542px;height:21px"></div>
<div class="vl" style="left:1191px;top:542px;height:21px"></div>
<div class="vl" style="left:1221px;top:542px;height:21px"></div>
<div class="vl" style="left:1251px;top:542px;height:21px"></div>
<div class="cell" style="left:16px;width:59px;top:543px;height:20px"><span>34</span></div>
<div class="cell" style="left:76px;width:118px;top:543px;height:20px"><span>420300324524</span></div>
<div class="cell l" style="left:195px;width:119px;top:543px;height:20px"><span>Tiếng Việt thực hành</span></div>
<div class="cell" style="left:315px;width:59px;top:543px;height:20px"><span>3</span></div>
<div class="cell red" style="left:375px;width:29px;top:543px;height:20px"><span>0,50</span></div>
<div class="cell" style="left:463px;width:28px;top:543px;height:20px"><span>9,50</span></div>
<div class="cell" style="left:492px;width:29px;top:543px;height:20px"><span>8,00</span></div>
<div class="cell" style="left:732px;width:29px;top:543px;height:20px"><span>9,00</span></div>
<div class="cell" style="left:762px;width:29px;top:543px;height:20px"><span>9,00</span></div>
<div class="cell" style="left:792px;width:29px;top:543px;height:20px"><span>9,00</span></div>
<div class="cell red" style="left:920px;width:68px;top:543px;height:20px"><span>Cấm thi</span></div>
<div class="cell" style="left:989px;width:65px;top:543px;height:20px"><span>0</span></div>
<div class="cell" style="left:1055px;width:48px;top:543px;height:20px"><span>F</span></div>
<div class="cell" style="left:1104px;width:47px;top:543px;height:20px"><span>Kém</span></div>
<div class="cell" style="left:1152px;width:39px;top:543px;height:20px"><span>Học lại</span></div>
<svg class="ic" style="left:1231px;top:545.7px" width="10" height="10" viewBox="0 0 10 10"><circle cx="5" cy="5" r="4.8" fill="#ee0c12"/><path d="M3 3 L7 7 M7 3 L3 7" stroke="#fff" stroke-width="1.3" fill="none"/></svg>
<div class="hl" style="top:542px;left:15px;width:1237px"></div>
<div class="vl" style="left:15px;top:563px;height:33px"></div>
<div class="vl" style="left:75px;top:563px;height:33px"></div>
<div class="vl" style="left:194px;top:563px;height:33px"></div>
<div class="vl" style="left:314px;top:563px;height:33px"></div>
<div class="vl" style="left:374px;top:563px;height:33px"></div>
<div class="vl" style="left:404px;top:563px;height:33px"></div>
<div class="vl" style="left:462px;top:563px;height:33px"></div>
<div class="vl" style="left:491px;top:563px;height:33px"></div>
<div class="vl" style="left:521px;top:563px;height:33px"></div>
<div class="vl" style="left:551px;top:563px;height:33px"></div>
<div class="vl" style="left:581px;top:563px;height:33px"></div>
<div class="vl" style="left:611px;top:563px;height:33px"></div>
<div class="vl" style="left:641px;top:563px;height:33px"></div>
<div class="vl" style="left:671px;top:563px;height:33px"></div>
<div class="vl" style="left:701px;top:563px;height:33px"></div>
<div class="vl" style="left:731px;top:563px;height:33px"></div>
<div class="vl" style="left:761px;top:563px;height:33px"></div>
<div class="vl" style="left:791px;top:563px;height:33px"></div>
<div class="vl" style="left:821px;top:563px;height:33px"></div>
<div class="vl" style="left:850px;top:563px;height:33px"></div>
<div class="vl" style="left:880px;top:563px;height:33px"></div>
<div class="vl" style="left:919px;top:563px;height:33px"></div>
<div class="vl" style="left:988px;top:563px;height:33px"></div>
<div class="vl" style="left:1054px;top:563px;height:33px"></div>
<div class="vl" style="left:1103px;top:563px;height:33px"></div>
<div class="vl" style="left:1151px;top:563px;height:33px"></div>
<div class="vl" style="left:1191px;top:563px;height:33px"></div>
<div class="vl" style="left:1221px;top:563px;height:33px"></div>
<div class="vl" style="left:1251px;top:563px;height:33px"></div>
<div class="cell" style="left:16px;width:59px;top:564px;height:32px"><span>35</span></div>
<div class="cell" style="left:76px;width:118px;top:564px;height:32px"><span>420300334703</span></div>
<div class="cell l" style="left:195px;width:119px;top:564px;height:32px"><span>Những vấn đề xã hội và đạo<br>đức nghề nghiệp</span></div>
<div class="cell" style="left:315px;width:59px;top:564px;height:32px"><span>3</span></div>
<div class="cell" style="left:375px;width:29px;top:564px;height:32px"><span>7,50</span></div>
<div class="cell" style="left:463px;width:28px;top:564px;height:32px"><span>8,00</span></div>
<div class="cell" style="left:492px;width:29px;top:564px;height:32px"><span>7,00</span></div>
<div class="cell" style="left:522px;width:29px;top:564px;height:32px"><span>7,00</span></div>
<div class="hl" style="top:563px;left:15px;width:1237px"></div>
<div class="vl" style="left:15px;top:596px;height:21px"></div>
<div class="vl" style="left:75px;top:596px;height:21px"></div>
<div class="vl" style="left:194px;top:596px;height:21px"></div>
<div class="vl" style="left:314px;top:596px;height:21px"></div>
<div class="vl" style="left:374px;top:596px;height:21px"></div>
<div class="vl" style="left:404px;top:596px;height:21px"></div>
<div class="vl" style="left:462px;top:596px;height:21px"></div>
<div class="vl" style="left:491px;top:596px;height:21px"></div>
<div class="vl" style="left:521px;top:596px;height:21px"></div>
<div class="vl" style="left:551px;top:596px;height:21px"></div>
<div class="vl" style="left:581px;top:596px;height:21px"></div>
<div class="vl" style="left:611px;top:596px;height:21px"></div>
<div class="vl" style="left:641px;top:596px;height:21px"></div>
<div class="vl" style="left:671px;top:596px;height:21px"></div>
<div class="vl" style="left:701px;top:596px;height:21px"></div>
<div class="vl" style="left:731px;top:596px;height:21px"></div>
<div class="vl" style="left:761px;top:596px;height:21px"></div>
<div class="vl" style="left:791px;top:596px;height:21px"></div>
<div class="vl" style="left:821px;top:596px;height:21px"></div>
<div class="vl" style="left:850px;top:596px;height:21px"></div>
<div class="vl" style="left:880px;top:596px;height:21px"></div>
<div class="vl" style="left:919px;top:596px;height:21px"></div>
<div class="vl" style="left:988px;top:596px;height:21px"></div>
<div class="vl" style="left:1054px;top:596px;height:21px"></div>
<div class="vl" style="left:1103px;top:596px;height:21px"></div>
<div class="vl" style="left:1151px;top:596px;height:21px"></div>
<div class="vl" style="left:1191px;top:596px;height:21px"></div>
<div class="vl" style="left:1221px;top:596px;height:21px"></div>
<div class="vl" style="left:1251px;top:596px;height:21px"></div>
<div class="cell" style="left:16px;width:59px;top:597px;height:20px"><span>36</span></div>
<div class="cell" style="left:76px;width:118px;top:597px;height:20px"><span>420300350105</span></div>
<div class="cell l" style="left:195px;width:119px;top:597px;height:20px"><span>Phát triển ứng dụng</span></div>
<div class="cell" style="left:315px;width:59px;top:597px;height:20px"><span>3</span></div>
<div class="cell" style="left:375px;width:29px;top:597px;height:20px"><span>6,00</span></div>
<div class="cell" style="left:463px;width:28px;top:597px;height:20px"><span>8,50</span></div>
<div class="cell red" style="left:492px;width:29px;top:597px;height:20px"><span>5,00</span></div>
<div class="cell" style="left:732px;width:29px;top:597px;height:20px"><span>8,00</span></div>
<div class="cell" style="left:762px;width:29px;top:597px;height:20px"><span>7,50</span></div>
<div class="cell" style="left:792px;width:29px;top:597px;height:20px"><span>8,00</span></div>
<div class="hl" style="top:596px;left:15px;width:1237px"></div>
<div class="vl" style="left:15px;top:617px;height:34px"></div>
<div class="vl" style="left:75px;top:617px;height:34px"></div>
<div class="vl" style="left:194px;top:617px;height:34px"></div>
<div class="vl" style="left:314px;top:617px;height:34px"></div>
<div class="vl" style="left:374px;top:617px;height:34px"></div>
<div class="vl" style="left:404px;top:617px;height:34px"></div>
<div class="vl" style="left:462px;top:617px;height:34px"></div>
<div class="vl" style="left:491px;top:617px;height:34px"></div>
<div class="vl" style="left:521px;top:617px;height:34px"></div>
<div class="vl" style="left:551px;top:617px;height:34px"></div>
<div class="vl" style="left:581px;top:617px;height:34px"></div>
<div class="vl" style="left:611px;top:617px;height:34px"></div>
<div class="vl" style="left:641px;top:617px;height:34px"></div>
<div class="vl" style="left:671px;top:617px;height:34px"></div>
<div class="vl" style="left:701px;top:617px;height:34px"></div>
<div class="vl" style="left:731px;top:617px;height:34px"></div>
<div class="vl" style="left:761px;top:617px;height:34px"></div>
<div class="vl" style="left:791px;top:617px;height:34px"></div>
<div class="vl" style="left:821px;top:617px;height:34px"></div>
<div class="vl" style="left:850px;top:617px;height:34px"></div>
<div class="vl" style="left:880px;top:617px;height:34px"></div>
<div class="vl" style="left:919px;top:617px;height:34px"></div>
<div class="vl" style="left:988px;top:617px;height:34px"></div>
<div class="vl" style="left:1054px;top:617px;height:34px"></div>
<div class="vl" style="left:1103px;top:617px;height:34px"></div>
<div class="vl" style="left:1151px;top:617px;height:34px"></div>
<div class="vl" style="left:1191px;top:617px;height:34px"></div>
<div class="vl" style="left:1221px;top:617px;height:34px"></div>
<div class="vl" style="left:1251px;top:617px;height:34px"></div>
<div class="cell" style="left:16px;width:59px;top:618px;height:33px"><span>37</span></div>
<div class="cell" style="left:76px;width:118px;top:618px;height:33px"><span>420301416802</span></div>
<div class="cell l" style="left:195px;width:119px;top:618px;height:33px"><span>Mô hình hóa dữ liệu NoSQL<br>MongoDB</span></div>
<div class="cell" style="left:315px;width:59px;top:618px;height:33px"><span>3</span></div>
<div class="cell" style="left:375px;width:29px;top:618px;height:33px"><span>8,00</span></div>
<div class="cell" style="left:463px;width:28px;top:618px;height:33px"><span>9,00</span></div>
<div class="cell" style="left:492px;width:29px;top:618px;height:33px"><span>8,50</span></div>
<div class="cell" style="left:522px;width:29px;top:618px;height:33px"><span>6,00</span></div>
<div class="hl" style="top:617px;left:15px;width:1237px"></div>
<div class="vl" style="left:15px;top:651px;height:20px"></div>
<div class="vl" style="left:194px;top:651px;height:20px"></div>
<div class="vl" style="left:374px;top:651px;height:20px"></div>
<div class="vl" style="left:1251px;top:651px;height:20px"></div>
<div class="cell l" style="left:16px;width:178px;top:652px;height:19px"><span>Điểm trung bình học kỳ hệ 10:</span></div>
<div class="cell l" style="left:195px;width:179px;top:652px;height:19px"><span>Điểm trung bình học kỳ hệ 4:</span></div>
<div class="hl" style="top:651px;left:15px;width:1237px"></div>
<div class="vl" style="left:15px;top:671px;height:21px"></div>
<div class="vl" style="left:194px;top:671px;height:21px"></div>
<div class="vl" style="left:374px;top:671px;height:21px"></div>
<div class="vl" style="left:1251px;top:671px;height:21px"></div>
<div class="cell l" style="left:16px;width:178px;top:672px;height:20px"><span>Điểm trung bình tích lũy:</span></div>
<div class="cell l" style="left:195px;width:179px;top:672px;height:20px"><span>Điểm trung bình tích lũy (hệ 4):</span></div>
<div class="hl" style="top:671px;left:15px;width:1237px"></div>
<div class="vl" style="left:15px;top:692px;height:20px"></div>
<div class="vl" style="left:194px;top:692px;height:20px"></div>
<div class="vl" style="left:374px;top:692px;height:20px"></div>
<div class="vl" style="left:1251px;top:692px;height:20px"></div>
<div class="cell l" style="left:16px;width:178px;top:693px;height:19px"><span>Tổng số tín chỉ đã đăng ký:</span></div>
<div class="cell l" style="left:195px;width:179px;top:693px;height:19px"><span>Tổng số tín chỉ tích lũy:</span></div>
<div class="hl" style="top:692px;left:15px;width:1237px"></div>
<div class="vl" style="left:15px;top:712px;height:21px"></div>
<div class="vl" style="left:194px;top:712px;height:21px"></div>
<div class="vl" style="left:374px;top:712px;height:21px"></div>
<div class="vl" style="left:1251px;top:712px;height:21px"></div>
<div class="cell l" style="left:16px;width:178px;top:713px;height:20px"><span>Tổng số tín chỉ đạt:</span></div>
<div class="cell l" style="left:195px;width:179px;top:713px;height:20px"><span>Tổng số tín chỉ nợ tính đến hiện tại:</span></div>
<div class="hl" style="top:712px;left:15px;width:1237px"></div>
<div class="vl" style="left:15px;top:733px;height:20px"></div>
<div class="vl" style="left:194px;top:733px;height:20px"></div>
<div class="vl" style="left:374px;top:733px;height:20px"></div>
<div class="vl" style="left:1251px;top:733px;height:20px"></div>
<div class="cell l" style="left:16px;width:178px;top:734px;height:19px"><span>Xếp loại học lực tích lũy:</span></div>
<div class="cell l" style="left:195px;width:179px;top:734px;height:19px"><span>Xếp loại học lực học kỳ:</span></div>
<div class="hl" style="top:733px;left:15px;width:1237px"></div>
<div class="hl" style="top:753px;left:15px;width:1237px"></div>
  <div class="wbox" style="left:586px;top:344px;width:108px;height:100px"></div>
  <div style="position:absolute;left:900px;top:568px;width:1px;height:11px;background:#7d8792"></div>
  <div id="hdr">
<svg style="position:absolute;left:6px;top:1px" width="64" height="34" viewBox="0 0 64 34">
<path d="M18.5 2.8 C20 5 22 7.5 22 10 C22 12 20.5 13.5 18.5 13.5 C16.5 13.5 15 12 15 10 C15 7.5 17 5 18.5 2.8Z" fill="#f01c24"/>
<circle cx="18.5" cy="13.6" r="1.7" fill="#fff"/><circle cx="18.5" cy="13.6" r="0.8" fill="#f01c24"/>
<path d="M9 9 C13 11 16 14 15.5 22 C12 19 9.5 15 9 9Z" fill="#f01c24"/>
<path d="M4 17.5 C8 19 12 21 15 24 C17 25.5 20 26 22 25.5 C20 27.5 16 28.5 13 27.5 C9 26 6 22 4 17.5Z" fill="#f01c24"/>
<rect x="17.3" y="16" width="2.4" height="7.5" fill="#1a2380"/>
<path d="M24 16 V25.2 M29.5 16 V25.2 M24 20.6 H29.5" stroke="#1a2380" stroke-width="2.1" fill="none"/>
<rect x="32" y="16.8" width="18" height="1.2" fill="#4b4f63" opacity="0.55"/>
<rect x="32" y="20.4" width="23" height="1.2" fill="#4b4f63" opacity="0.55"/>
<rect x="32" y="23.9" width="26" height="1.2" fill="#4b4f63" opacity="0.55"/>
</svg>
<div id="search"><span>Tìm kiếm...</span>
<svg style="position:absolute;left:151px;top:6px" width="11" height="11" viewBox="0 0 11 11"><circle cx="4.6" cy="4.6" r="3.6" fill="none" stroke="#444" stroke-width="1.3"/><path d="M7.3 7.3 L10 10" stroke="#444" stroke-width="1.5"/></svg>
</div>
<svg style="position:absolute;left:1057px;top:13px" width="8" height="8" viewBox="0 0 8 8"><path d="M4 0.5 L8 4 H6.8 V7.5 H4.8 V5.2 H3.2 V7.5 H1.2 V4 H0 Z" fill="#2b3a4a"/><rect x="5.6" y="0.8" width="1.2" height="2" fill="#2b3a4a"/></svg>
<div class="nav" style="left:1069px">Trang chủ</div>
<svg style="position:absolute;left:1118px;top:12px" width="10" height="11" viewBox="0 0 10 11"><path d="M5 1 C7.2 1 8 2.8 8 4.8 V7.2 L9.2 8.6 H0.8 L2 7.2 V4.8 C2 2.8 2.8 1 5 1Z" fill="none" stroke="#56636e" stroke-width="0.9"/><path d="M4 9.6 H6" stroke="#56636e" stroke-width="1"/></svg>
<div class="nav" style="left:1133px">Tin tức</div>
</div>
  <div id="grid"><i style="left:9.7px;top:6.8px"></i><i style="left:13.899999999999999px;top:6.8px"></i><i style="left:18.1px;top:6.8px"></i><i style="left:9.7px;top:11.5px"></i><i style="left:13.899999999999999px;top:11.5px"></i><i style="left:18.1px;top:11.5px"></i><i style="left:9.7px;top:16.2px"></i><i style="left:13.899999999999999px;top:16.2px"></i><i style="left:18.1px;top:16.2px"></i></div>
  <div id="sbtrack"></div><div id="hdrx"></div><div id="sbthumb"></div>
 </div></div>
</div>
</body></html>
